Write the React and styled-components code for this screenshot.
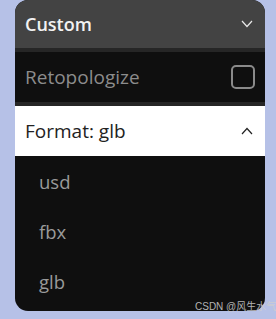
import React from 'react'
import styled, { createGlobalStyle } from 'styled-components'

const Global = createGlobalStyle`
  html, body {
    margin: 0;
    padding: 0;
    background: #b6c1e7;
    font-family: "Open Sans", "Noto Sans", sans-serif;
  }
`;

const Page = styled.div`
  position: relative;
  width: 276px;
  height: 319px;
  padding: 0 11px 0 15px;
  box-sizing: border-box;
`;

const Panel = styled.div`
  width: 250px;
  height: 311px;
  background: #0f0f0f;
  border-radius: 13px;
  overflow: hidden;
  display: flex;
  flex-direction: column;
`;

const Row = styled.div`
  height: ${p => p.h}px;
  display: flex;
  align-items: center;
  justify-content: space-between;
  padding: 0 12px 0 10px;
  box-sizing: border-box;
  background: ${p => p.bg};
  color: ${p => p.fg};
  font-size: ${p => p.size || 17}px;
  font-weight: ${p => p.weight || 400};
  border-bottom: ${p => p.line ? '4px solid #262626' : 'none'};
  flex-shrink: 0;
`;

const Check = styled.div`
  width: 20px;
  height: 20px;
  border: 2px solid #8a8a8a;
  border-radius: 5px;
  margin-right: -2px;
`;

const Item = styled.div`
  height: 50px;
  display: flex;
  align-items: center;
  padding-left: 24px;
  color: #9a9a9a;
  font-size: 18.5px;
`;

const Chevron = ({ up, color }) => (
  <svg width="12" height="8" viewBox="0 0 12 8">
    <path d={up ? 'M1 7 L6 1.5 L11 7' : 'M1 1 L6 6.5 L11 1'} fill="none" stroke={color} strokeWidth="1.2" />
  </svg>
);

const Watermark = styled.div`
  position: absolute;
  left: 195px;
  bottom: 6px;
  white-space: nowrap;
  font-size: 10px;
  line-height: 12px;
  color: #cfcfcf;
  font-family: "Liberation Sans", "Noto Sans CJK SC", sans-serif;
  opacity: 0.85;
`;

export default function App() {
  return (
    <Page>
      <Global />
      <Panel>
        <Row h={52} bg="#434343" fg="#f2f2f2" weight={600} size={18} line>
          Custom
          <Chevron color="#e8e8e8" />
        </Row>
        <Row h={54} bg="#0f0f0f" fg="#8c8c8c" size={19} line>
          Retopologize
          <Check />
        </Row>
        <Row h={50} bg="#ffffff" fg="#222222" size={19}>
          Format: glb
          <Chevron up color="#222" />
        </Row>
        <Item>usd</Item>
        <Item>fbx</Item>
        <Item>glb</Item>
      </Panel>
      <Watermark>CSDN @风生水气</Watermark>
    </Page>
  );
}
